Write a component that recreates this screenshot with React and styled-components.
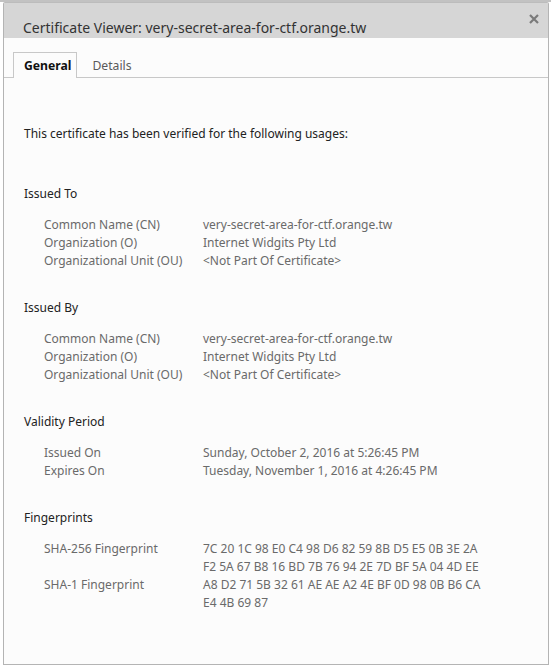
import React from 'react'
import styled, { createGlobalStyle } from 'styled-components'

const GlobalStyle = createGlobalStyle`
  html, body {
    margin: 0;
    padding: 0;
    background: #ffffff;
    font-family: "Noto Sans", "Open Sans", sans-serif;
  }
`

const Page = styled.div`
  box-sizing: border-box;
  height: 667px;
  padding: 0 2px 1px 3px;
  border-top: 2px solid #c2c2c2;
`

const Dialog = styled.div`
  box-sizing: border-box;
  height: 663px;
  border: 1px solid #b4b4b4;
  border-top-color: #bcbcbc;
  border-radius: 2px 2px 0 0;
  background: #fcfcfc;
  display: flex;
  flex-direction: column;
`

const Header = styled.div`
  position: relative;
  box-sizing: border-box;
  height: 35px;
  background: #d6d6d6;
  padding: 15px 19px 0;
`

const Title = styled.h1`
  margin: 0;
  font-size: 14px;
  line-height: 20px;
  font-weight: 400;
  color: #333;
`

const Close = styled.button`
  position: absolute;
  top: 9px;
  right: 8px;
  width: 13px;
  height: 13px;
  padding: 0;
  border: 0;
  background: none;
  display: flex;
  align-items: center;
  justify-content: center;
`

const TabBar = styled.div`
  display: flex;
  padding: 14px 0 0 9px;
  border-bottom: 1px solid #c8c8c8;
`

const Tab = styled.div`
  box-sizing: border-box;
  height: 26px;
  padding: ${p => (p.$active ? '0 5px 0 10px' : '0 14px')};
  margin-bottom: -1px;
  display: flex;
  align-items: center;
  font-size: 12.2px;
  font-weight: ${p => (p.$active ? 700 : 400)};
  color: ${p => (p.$active ? '#111' : '#5a5a5a')};
  background: ${p => (p.$active ? '#fcfcfc' : 'transparent')};
  border: 1px solid ${p => (p.$active ? '#c8c8c8' : 'transparent')};
  border-bottom: none;
`

const Content = styled.div`
  display: flex;
  flex-direction: column;
  padding: 47px 20px 0;
  font-size: 12px;
  line-height: 18px;
`

const Intro = styled.p`
  margin: 0 0 13px;
  color: #222;
`

const Section = styled.section`
  margin-top: 29px;
`

const Heading = styled.h2`
  margin: 0 0 13px;
  font-size: 12px;
  line-height: 18px;
  font-weight: 400;
  color: #222;
`

const Row = styled.div`
  display: grid;
  grid-template-columns: 159px 1fr;
  padding-left: 20px;
  color: #6a6a6a;
`

const Value = styled.div`
  white-space: pre-line;
`

const sections = [
  {
    title: 'Issued To',
    rows: [
      ['Common Name (CN)', 'very-secret-area-for-ctf.orange.tw'],
      ['Organization (O)', 'Internet Widgits Pty Ltd'],
      ['Organizational Unit (OU)', '<Not Part Of Certificate>'],
    ],
  },
  {
    title: 'Issued By',
    rows: [
      ['Common Name (CN)', 'very-secret-area-for-ctf.orange.tw'],
      ['Organization (O)', 'Internet Widgits Pty Ltd'],
      ['Organizational Unit (OU)', '<Not Part Of Certificate>'],
    ],
  },
  {
    title: 'Validity Period',
    rows: [
      ['Issued On', 'Sunday, October 2, 2016 at 5:26:45 PM'],
      ['Expires On', 'Tuesday, November 1, 2016 at 4:26:45 PM'],
    ],
  },
  {
    title: 'Fingerprints',
    rows: [
      ['SHA-256 Fingerprint', '7C 20 1C 98 E0 C4 98 D6 82 59 8B D5 E5 0B 3E 2A\nF2 5A 67 B8 16 BD 7B 76 94 2E 7D BF 5A 04 4D EE'],
      ['SHA-1 Fingerprint', 'A8 D2 71 5B 32 61 AE AE A2 4E BF 0D 98 0B B6 CA\nE4 4B 69 87'],
    ],
  },
]

export default function App() {
  return (
    <Page>
      <GlobalStyle />
      <Dialog>
        <Header>
          <Title>Certificate Viewer: very-secret-area-for-ctf.orange.tw</Title>
          <Close aria-label="Close">
            <svg width="10" height="10" viewBox="0 0 10 10">
              <path d="M1 1L9 9M9 1L1 9" stroke="#7a7a7a" strokeWidth="2.2" />
            </svg>
          </Close>
        </Header>
        <TabBar>
          <Tab $active>General</Tab>
          <Tab>Details</Tab>
        </TabBar>
        <Content>
          <Intro>This certificate has been verified for the following usages:</Intro>
          {sections.map(s => (
            <Section key={s.title}>
              <Heading>{s.title}</Heading>
              {s.rows.map(([label, value]) => (
                <Row key={label}>
                  <span>{label}</span>
                  <Value>{value}</Value>
                </Row>
              ))}
            </Section>
          ))}
        </Content>
      </Dialog>
    </Page>
  )
}
